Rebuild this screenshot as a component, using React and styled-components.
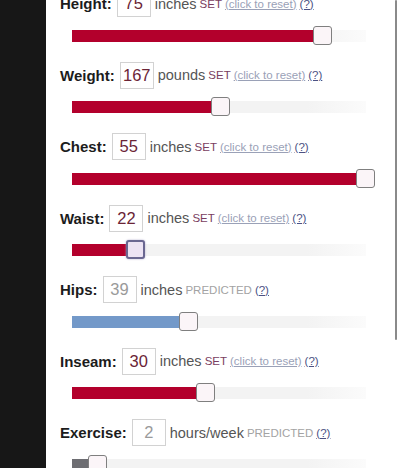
import React from 'react';
import styled, { createGlobalStyle } from 'styled-components';

const GlobalStyle = createGlobalStyle`
  html, body {
    margin: 0;
    padding: 0;
    height: 100%;
    overflow: hidden;
    background: #ffffff;
  }
  body {
    font-family: "Liberation Sans", Arial, sans-serif;
  }
`;

const fields = [
  { name: 'Height', value: 75, unit: 'inches', status: 'set', pos: 250, color: '#b3002c' },
  { name: 'Weight', value: 167, unit: 'pounds', status: 'set', pos: 148, color: '#b3002c' },
  { name: 'Chest', value: 55, unit: 'inches', status: 'set', pos: 293, color: '#b3002c' },
  { name: 'Waist', value: 22, unit: 'inches', status: 'set', pos: 63, color: '#b3002c', focused: true },
  { name: 'Hips', value: 39, unit: 'inches', status: 'predicted', pos: 116, color: '#7399c9' },
  { name: 'Inseam', value: 30, unit: 'inches', status: 'set', pos: 133, color: '#b3002c' },
  { name: 'Exercise', value: 2, unit: 'hours/week', status: 'predicted', pos: 25, color: '#6d6d72' },
];

export default function App() {
  return (
    <>
      <GlobalStyle />
      <Page>
        <Sidebar />
        <Panel>
          <FieldList>
            {fields.map(f => (
              <Field key={f.name}>
                <LabelRow>
                  <Label>{f.name}:</Label>
                  <ValueBox predicted={f.status === 'predicted'}>{f.value}</ValueBox>
                  <Unit>{f.unit}</Unit>
                  {f.status === 'set' ? (
                    <>
                      <Status>SET</Status>
                      <ResetLink>(click to reset)</ResetLink>
                    </>
                  ) : (
                    <Status predicted>PREDICTED</Status>
                  )}
                  <HelpLink>(?)</HelpLink>
                </LabelRow>
                <Slider>
                  <Fill color={f.color} style={{ width: f.pos }} />
                  <Thumb focused={f.focused} style={{ left: f.pos - 9 }} />
                </Slider>
              </Field>
            ))}
          </FieldList>
          <ScrollThumb />
        </Panel>
      </Page>
    </>
  );
}

const Page = styled.div`
  display: flex;
  width: 400px;
  height: 468px;
  overflow: hidden;
`;

const Sidebar = styled.div`
  width: 46px;
  flex-shrink: 0;
  background: #171717;
`;

const Panel = styled.div`
  position: relative;
  flex: 1;
  background: #ffffff;
  padding-left: 14px;
`;

const FieldList = styled.div`
  display: flex;
  flex-direction: column;
  margin-top: -10px;
`;

const Field = styled.div`
  display: flex;
  flex-direction: column;
  gap: 8.5px;
  padding-bottom: 16px;
`;

const LabelRow = styled.div`
  display: flex;
  align-items: center;
  height: 27px;
  white-space: nowrap;
`;

const Label = styled.span`
  font-size: 15px;
  font-weight: bold;
  color: #1c1c1c;
  margin-right: 5px;
`;

const ValueBox = styled.span`
  box-sizing: border-box;
  width: 34px;
  height: 27px;
  display: flex;
  align-items: center;
  justify-content: center;
  border: 1px solid #d2d2d2;
  font-size: 16.5px;
  color: ${p => (p.predicted ? '#9a9a9a' : '#6b2436')};
  margin-right: 4px;
`;

const Unit = styled.span`
  font-size: 14.5px;
  color: #555555;
  margin-right: 3px;
`;

const Status = styled.span`
  font-size: 11.5px;
  color: ${p => (p.predicted ? '#a3a3a3' : '#7a3d60')};
  margin-right: 3px;
`;

const ResetLink = styled.span`
  font-size: 11.5px;
  color: #9aa1b7;
  text-decoration: underline;
  margin-right: 3px;
`;

const HelpLink = styled.span`
  font-size: 11.5px;
  color: #4b5183;
  text-decoration: underline;
`;

const Slider = styled.div`
  position: relative;
  margin-left: 12px;
  width: 294px;
  height: 20px;
  display: flex;
  align-items: center;
  &::before {
    content: '';
    position: absolute;
    left: 0;
    right: 0;
    top: 4px;
    height: 12px;
    background: linear-gradient(to right, #f3f3f3 80%, #fbfbfb);
  }
`;

const Fill = styled.div`
  position: relative;
  height: 12px;
  background: ${p => p.color};
`;

const Thumb = styled.div`
  position: absolute;
  top: 0;
  box-sizing: border-box;
  width: 19px;
  height: 19px;
  border-radius: 3px;
  border: ${p => (p.focused ? '2px solid #6a6791' : '1.5px solid #7f7f7f')};
  background: ${p => (p.focused ? '#ece3f3' : '#fbf5f8')};
  box-shadow: ${p => (p.focused ? '0 0 2px #a9a3c6' : 'none')};
`;

const ScrollThumb = styled.div`
  position: absolute;
  top: 0;
  right: 3px;
  width: 2px;
  height: 340px;
  background: #8a8a8a;
  border-radius: 1px;
`;
